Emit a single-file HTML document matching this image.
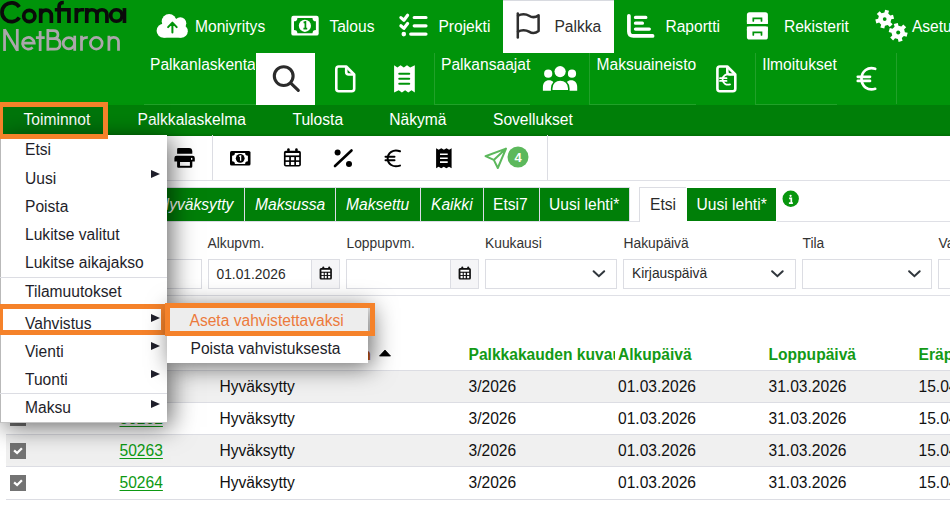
<!DOCTYPE html>
<html><head><meta charset="utf-8">
<style>
*{box-sizing:border-box}
html,body{margin:0;padding:0}
body{width:950px;height:514px;overflow:hidden;position:relative;background:#fff;font-family:"Liberation Sans",sans-serif;font-size:15.6px;color:#222}
.a{position:absolute;white-space:nowrap}
.t{position:absolute;white-space:nowrap;line-height:20px;height:20px}
#hdr{position:absolute;left:0;top:0;width:950px;height:105px;background:#00940a}
.w{color:#fff}
.sep{position:absolute;width:1px;background:rgba(255,255,255,.13)}
.hl{position:absolute;height:1px;background:rgba(255,255,255,.13)}
#mb{position:absolute;left:0;top:105px;width:950px;height:30.6px;background:linear-gradient(#007f08 0,#007f08 90%,#006f05 100%)}
#tb{position:absolute;left:0;top:135px;width:950px;height:46px;border-bottom:1px solid #dfe0e6}
.tsep{position:absolute;top:135px;width:1px;height:45px;background:#dcdde3}
.tab{position:absolute;top:187px;height:35px;background:#007f08;color:#fff;border:1px solid #dcdce6;font-style:italic}
.lbl{position:absolute;font-size:13.8px;color:#333;line-height:16px;white-space:nowrap}
.inp{position:absolute;top:259px;height:30px;border:1px solid #dcdde3;background:#fff}
.row{position:absolute;left:6px;width:944px;border-bottom:1px solid #dcdde3}
.g{background:#f0f0f0}
.chk{position:absolute;left:10px;width:16px;height:16px;background:#737373}
.lnk{color:#0d9912;text-decoration:underline;text-underline-offset:2px}
.th{font-weight:bold;color:#139a16}
#menu{position:absolute;left:0;top:135px;width:167px;height:287.5px;background:#fff;border-left:1px solid #b9b9b9;border-bottom:1px solid #c4c4c4;box-shadow:4px 4px 24px rgba(0,0,0,.6)}
.mi{position:absolute;left:25px;line-height:20px;height:20px;color:#1e1e2a}
.arr{position:absolute;left:150.8px;width:0;height:0;border-top:4.85px solid transparent;border-bottom:4.85px solid transparent;border-left:9.8px solid #1e1e2a}
.msep{position:absolute;left:0;width:167px;height:1px;background:#dcdde3}
.ob{position:absolute;border:5px solid #f5822a}
</style></head><body>
<div id="hdr"></div>
<svg class="a" style="left:0;top:0" width="130" height="55" viewBox="0 0 130 55">
 <g stroke="#0a0a0a" stroke-width="3.7" fill="none">
  <path d="M19.3 7A9.45 9.45 0 1 0 19.3 17.5"/>
  <circle cx="29.3" cy="15.95" r="5.6"/>
  <path d="M40.7 8.4V22.9M40.7 15.5C40.7 12 43 10.15 46 10.15C49 10.15 51.35 12 51.35 15.5V22.9"/>
  <path d="M59.1 22.9V6.5C59.1 3.8 60.8 2.5 63.8 2.5M54.8 9.75H70.7M68.95 8.1V22.9"/>
  <path d="M76.3 8.1V23M76.3 14.8C76.3 11.3 78.5 9.75 81.5 9.75H84.3"/>
  <path d="M86.75 8.1V23M86.75 15C86.75 11.5 89 9.75 91.9 9.75C94.8 9.75 97 11.5 97 15V23M97 15C97 11.5 99.2 9.75 102 9.75C104.8 9.75 106.95 11.5 106.95 15V23"/>
  <circle cx="116.4" cy="15.5" r="5.75"/>
  <path d="M124.45 8.1V23"/>
 </g>
 <g stroke="#aba7ab" stroke-width="2.75" fill="none">
  <path d="M4.55 51.1V28.9M4.55 29.4L17.3 50.6M17.3 51.1V28.9"/>
  <path d="M22.55 43H34.25A5.85 5.85 0 1 0 32.6 47.4"/>
  <path d="M40.15 30.9V51.1M35.9 37.5H44.7"/>
  <path d="M47.85 28.9V50.85M47.85 30.55H53.5C56.5 30.55 57.95 32.3 57.95 34.6C57.95 36.9 56.5 38.6 53.5 38.6H47.85M47.85 38.6H54.5C58 38.6 60.05 40.6 60.05 43.9C60.05 47.2 58 49.2 54.5 49.2H47.85"/>
  <circle cx="68.85" cy="43.25" r="5.65"/><path d="M74.7 35.7V50.8"/>
  <path d="M81.5 35.7V50.8M81.5 42C81.5 38.5 83.5 37.35 87.8 37.35"/>
  <circle cx="96.3" cy="43.25" r="5.85"/>
  <path d="M108.9 35.7V50.8M108.9 42.5C108.9 39 111 37.35 113.7 37.35C116.4 37.35 118.5 39 118.5 42.5V50.8"/>
 </g>
</svg>
<div class="t w" style="left:195px;top:16.7px">Moniyritys</div>
<div class="t w" style="left:329.4px;top:16.7px">Talous</div>
<div class="t w" style="left:438.4px;top:16.7px">Projekti</div>
<div class="a" style="left:503px;top:0;width:111px;height:53px;background:#fff;border-top:1px solid #d8dae0"></div>
<div class="t" style="left:554.4px;top:16.7px;color:#2e2e2e">Palkka</div>
<div class="t w" style="left:665.4px;top:16.7px">Raportti</div>
<div class="t w" style="left:783.9px;top:16.7px">Rekisterit</div>
<div class="t w" style="left:911.9px;top:16.7px">Asetukset</div>
<div class="t w" style="left:150px;top:54.7px;width:105px;overflow:hidden">Palkanlaskenta</div>
<div class="a" style="left:256px;top:53px;width:59px;height:52px;background:#fff"></div>
<div class="t w" style="left:441px;top:54.7px">Palkansaajat</div>
<div class="t w" style="left:596.5px;top:54.7px">Maksuaineisto</div>
<div class="t w" style="left:762.3px;top:55px">Ilmoitukset</div>
<div class="sep" style="left:434px;top:53px;height:51px"></div>
<div class="sep" style="left:589px;top:53px;height:51px"></div>
<div class="sep" style="left:755px;top:53px;height:51px"></div>
<div class="sep" style="left:896px;top:53px;height:51px"></div>
<div class="hl" style="left:144px;top:104px;width:112px"></div>
<div class="hl" style="left:434px;top:104px;width:96px"></div>
<div class="hl" style="left:589px;top:104px;width:107px"></div>
<div class="hl" style="left:755px;top:104px;width:82px"></div>
<svg class="a" style="left:0;top:0" width="950" height="105" viewBox="0 0 950 105">
 <g fill="#fff">
  <circle cx="169.1" cy="21.5" r="7.4"/><circle cx="180.3" cy="23.3" r="6"/><circle cx="163.6" cy="30.7" r="7"/><circle cx="181.3" cy="31.2" r="6.5"/><rect x="163.6" y="23" width="17.7" height="14.7"/>
 </g>
 <path d="M172.4 32.6V22.8M168.1 27.1L172.4 22.6L176.7 27.1" stroke="#00940a" stroke-width="2" fill="none" stroke-linecap="round" stroke-linejoin="round"/>
 <rect x="291.3" y="15.8" width="27.4" height="19.8" rx="2.2" fill="#fff"/>
 <path d="M297.4 17.9H312.5A3.4 3.4 0 0 0 315.9 21.3V29.9A3.4 3.4 0 0 0 312.5 33.3H297.4A3.4 3.4 0 0 0 294 29.9V21.3A3.4 3.4 0 0 0 297.4 17.9Z" fill="#00940a"/>
 <circle cx="304.9" cy="25.8" r="6.1" fill="#fff"/>
 <path d="M303.6 22.6L305.4 22V28.4M303.4 28.6H307.2" stroke="#00940a" stroke-width="1.7" fill="none"/>
 <g stroke="#fff" stroke-width="3.2" stroke-linecap="round" stroke-linejoin="round" fill="none">
  <path d="M400.9 17.6L403.9 20.2L407.6 15.3M400.9 25.8L403.9 28.4L407.6 23.5"/>
  <path d="M414.2 17.5H426M414.2 25.8H426M410.7 34.1H426"/>
 </g>
 <circle cx="403.8" cy="34.1" r="2.3" fill="#fff"/>
 <g stroke="#2e2e2e" stroke-width="2.5" fill="none" stroke-linecap="round" stroke-linejoin="round">
  <path d="M517.8 13.6V37.4"/>
  <path d="M518 15.7C521 13.8 526 13.8 529 15.7C532 17.6 536 17.2 538.6 15.2V31C536 33 532 33.5 529 31.6C526 29.7 521 29.7 518 31.6"/>
 </g>
 <g stroke="#fff" stroke-linecap="round" fill="none">
  <path d="M628.9 15.8V31.5Q628.9 35.9 633.3 35.9H652.6" stroke-width="3.7" stroke-linejoin="round"/>
  <path d="M635.5 17.4H645.8M635.5 23.2H642.4M635.5 29.1H649.3" stroke-width="3.3"/>
 </g>
 <rect x="746.9" y="12.2" width="21" height="11.8" rx="2.6" fill="#fff"/>
 <rect x="746.9" y="26.6" width="21" height="12.9" rx="2.6" fill="#fff"/>
 <rect x="746.9" y="20" width="21" height="4" fill="#fff"/><rect x="746.9" y="26.6" width="21" height="4" fill="#fff"/>
 <path d="M753.3 21V18.3H761.5V21M753.3 35V32.3H761.5V35" stroke="#00940a" stroke-width="1.7" fill="none" stroke-linecap="round"/>
 <g fill="#fff">
  <path d="M890.29 15.58 L893.03 14.75 L894.09 18.71 L891.30 19.35 L890.54 22.18 L892.64 24.14 L889.74 27.04 L887.78 24.94 L884.95 25.70 L884.31 28.49 L880.35 27.43 L881.18 24.69 L879.11 22.62 L876.37 23.45 L875.31 19.49 L878.10 18.85 L878.86 16.02 L876.76 14.06 L879.66 11.16 L881.62 13.26 L884.45 12.50 L885.09 9.71 L889.05 10.77 L888.22 13.51Z"/>
  <path d="M904.90 32.14 L907.69 32.80 L906.62 36.80 L903.87 35.97 L901.77 38.07 L902.60 40.82 L898.60 41.89 L897.94 39.10 L895.07 38.33 L893.11 40.42 L890.18 37.49 L892.27 35.53 L891.50 32.66 L888.71 32.00 L889.78 28.00 L892.53 28.83 L894.63 26.73 L893.80 23.98 L897.80 22.91 L898.46 25.70 L901.33 26.47 L903.29 24.38 L906.22 27.31 L904.13 29.27Z"/>
 </g>
 <circle cx="884.7" cy="19.1" r="1.9" fill="#00940a"/><circle cx="898.2" cy="32.4" r="2" fill="#00940a"/>
 <g stroke="#2b2b2b" stroke-width="3.1" fill="none" stroke-linecap="round">
  <circle cx="283.7" cy="76.1" r="9.4"/><path d="M291.3 83.6L298.3 90.4"/>
 </g>
 <g stroke="#fff" stroke-width="2.6" fill="none" stroke-linejoin="round">
  <path d="M336.3 69Q336.3 66.5 338.8 66.5H346.2L354.2 74.5V88.7Q354.2 91.2 351.7 91.2H338.8Q336.3 91.2 336.3 88.7Z"/>
  <path d="M346.2 66.5V72Q346.2 74.5 348.7 74.5H354.2"/>
  <path d="M717.4 69Q717.4 66.5 719.9 66.5H727.3L735.3 74.5V88.7Q735.3 91.2 732.8 91.2H719.9Q717.4 91.2 717.4 88.7Z"/>
  <path d="M727.3 66.5V72Q727.3 74.5 729.8 74.5H735.3"/>
 </g>
 <path d="M730 74.5C726 73.5 722.6 76 722.6 79.5C722.6 83 726 85.5 730 84.4M720 78.2H726.5M720 80.9H726.5" stroke="#fff" stroke-width="1.8" fill="none" stroke-linecap="round"/>
 <path d="M394.1 65.2L397.4 67.4L400.6 65.2L403.8 67.4L407 65.2L410.2 67.4L414.8 65.2V92.5L411.5 90.3L408.3 92.5L405.1 90.3L401.9 92.5L398.7 90.3L394.1 92.5Z" fill="#fff"/>
 <path d="M399.3 73.7H409.2M399.3 78.8H409.2M399.3 83.8H409.2" stroke="#00940a" stroke-width="2.1" stroke-linecap="round"/>
 <g fill="#fff">
  <circle cx="560.1" cy="71.6" r="5.6"/><circle cx="548.2" cy="73.7" r="4.1"/><circle cx="572" cy="73.7" r="4.1"/>
  <path d="M542.9 90.8V87C542.9 83 545.5 80.3 549 80.3C552.5 80.3 555 83 555 87V90.8Z"/>
  <path d="M565.2 90.8V87C565.2 83 567.7 80.3 571.2 80.3C574.7 80.3 577.2 83 577.2 87V90.8Z"/>
 </g>
 <path d="M551.7 90.8V88.5C551.7 83.2 555.5 80 560.2 80C565 80 568.8 83.2 568.8 88.5V90.8Z" fill="#fff" stroke="#00940a" stroke-width="1.6"/>
 <path d="M875.2 68.8C868 66.5 861.5 71 861.5 78.8C861.5 86.6 868 91 875.2 88.8M857.8 76.8H870M857.8 80.9H870" stroke="#fff" stroke-width="2.7" fill="none" stroke-linecap="round"/>
</svg>

<div id="mb"></div>
<div class="a" style="left:0;top:105px;width:103px;height:30px;background:#00750b"></div>
<div class="t w" style="left:23.5px;top:110px">Toiminnot</div>
<div class="t w" style="left:137.5px;top:110px">Palkkalaskelma</div>
<div class="t w" style="left:292.5px;top:110px">Tulosta</div>
<div class="t w" style="left:389.3px;top:110px">Näkymä</div>
<div class="t w" style="left:493px;top:110px">Sovellukset</div>

<div id="tb"></div>
<div class="tsep" style="left:212px"></div>
<div class="tsep" style="left:546.5px"></div>
<svg class="a" style="left:0;top:135px" width="950" height="46" viewBox="0 135 950 46">
 <g fill="#000">
  <path d="M177.1 149.3Q177.1 148.1 178.3 148.1H189Q192.3 148.1 192.3 151.5V153.8H177.1Z"/>
  <path d="M176.6 155.7H192.6Q194.8 155.7 194.8 157.9V161.4H192.3V166.4Q192.3 167.7 191 167.7H178.4Q177.1 167.7 177.1 166.4V161.4H174.4V157.9Q174.4 155.7 176.6 155.7Z"/>
 </g>
 <rect x="180" y="162" width="9.9" height="3.8" fill="#fff"/>
 <rect x="191" y="157.9" width="1.3" height="1.9" fill="#fff"/>
 <rect x="230" y="150.9" width="20.5" height="14.7" rx="1.6" fill="#000"/>
 <path d="M234.9 153H245.1A2.8 2.8 0 0 0 247.9 155.8V161.2A2.8 2.8 0 0 0 245.1 164H234.9A2.8 2.8 0 0 0 232.1 161.2V155.8A2.8 2.8 0 0 0 234.9 153Z" fill="#fff"/>
 <circle cx="240.2" cy="158.3" r="4.4" fill="#000"/>
 <path d="M239.2 156.4L240.6 155.9V160.8" stroke="#fff" stroke-width="1.3" fill="none"/>
 <rect x="283.9" y="150.8" width="17" height="15.8" rx="2" fill="#000"/>
 <rect x="287.2" y="148.2" width="2.5" height="4" rx="1.2" fill="#000"/><rect x="295.2" y="148.2" width="2.5" height="4" rx="1.2" fill="#000"/>
 <g fill="#fff"><rect x="285.6" y="153" width="13.6" height="2.4"/>
 <rect x="285.6" y="157.1" width="3.6" height="3.2"/><rect x="290.9" y="157.1" width="3.4" height="3.2"/><rect x="296" y="157.1" width="3.2" height="3.2"/>
 <rect x="285.6" y="161.9" width="3.6" height="3.1"/><rect x="290.9" y="161.9" width="3.4" height="3.1"/><rect x="296" y="161.9" width="3.2" height="3.1"/></g>
<path d="M335 166L351.5 150.5" stroke="#000" stroke-width="2.6" stroke-linecap="round"/>
 <circle cx="337.6" cy="152.6" r="3" fill="#000"/><circle cx="349" cy="164" r="3" fill="#000"/>
 <path d="M400 151.3C393 148.8 387.7 153 387.7 158.5C387.7 164 393 168 400 165.6M385.5 156.8H394.5M385.5 160.3H394.5" stroke="#000" stroke-width="2" fill="none" stroke-linecap="round"/>
 <path d="M436.1 148.2L438.7 149.7L441.3 148.2L443.9 149.7L446.5 148.2L449.1 149.7L451.6 148.2V168.2L449 166.7L446.4 168.2L443.8 166.7L441.2 168.2L438.6 166.7L436.1 168.2Z" fill="#000"/>
 <path d="M440 154.3H447.7M440 158.2H447.7M440 162.1H447.7" stroke="#fff" stroke-width="1.6"/>
 <path d="M506 148.6L485.5 156.2L493.8 159.9L497.8 168L506 148.6ZM493.8 159.9L506 148.6" stroke="#5cb85c" stroke-width="2" fill="none" stroke-linejoin="round"/>
 <circle cx="518" cy="157" r="10.5" fill="#5cb85c"/>
 <text x="518" y="161.8" font-family="Liberation Sans" font-weight="bold" font-size="13" fill="#fff" text-anchor="middle">4</text>
</svg>


<div class="a" style="left:0;top:221px;width:950px;height:1px;background:#dfe0e6"></div>
<div class="tab" style="left:150px;width:95px"><span class="t" style="left:7px;top:6.8px">Hyväksytty</span></div>
<div class="tab" style="left:244px;width:92px"><span class="t" style="left:10px;top:6.8px">Maksussa</span></div>
<div class="tab" style="left:335px;width:86px"><span class="t" style="left:10px;top:6.8px">Maksettu</span></div>
<div class="tab" style="left:420px;width:64px"><span class="t" style="left:10px;top:6.8px">Kaikki</span></div>
<div class="tab" style="left:483px;width:57px;font-style:normal"><span class="t" style="left:9px;top:6.8px">Etsi7</span></div>
<div class="tab" style="left:539px;width:91px;font-style:normal"><span class="t" style="left:9px;top:6.8px">Uusi lehti*</span></div>
<div class="a" style="left:639px;top:187px;width:48px;height:35px;background:#fff;border:1px solid #dcdde3;border-bottom:0"></div>
<div class="t" style="left:650px;top:194.5px;color:#2a2a2a">Etsi</div>
<div class="tab" style="left:686px;width:91px;font-style:normal;border-color:#fff"><span class="t" style="left:9.5px;top:6.8px">Uusi lehti*</span></div>
<svg class="a" style="left:782px;top:190px" width="18" height="18" viewBox="0 0 18 18"><circle cx="8.7" cy="8.75" r="8.2" fill="#08960e"/><circle cx="8.6" cy="5.8" r="1.15" fill="#fff"/><path d="M7.1 8.3H9.3V12.9M6.9 13.2H10.9" stroke="#fff" stroke-width="1.7" fill="none"/></svg>

<div class="lbl" style="left:207.5px;top:236px">Alkupvm.</div>
<div class="lbl" style="left:346.5px;top:236px">Loppupvm.</div>
<div class="lbl" style="left:485px;top:236px">Kuukausi</div>
<div class="lbl" style="left:623.5px;top:236px">Hakupäivä</div>
<div class="lbl" style="left:802.5px;top:236px">Tila</div>
<div class="lbl" style="left:938.5px;top:236px">Valinta</div>
<div class="inp" style="left:100px;width:102px"></div>
<div class="inp" style="left:208px;width:132px"></div>
<div class="a" style="left:311px;top:260px;width:28px;height:28px;background:#f5f5f7;border-left:1px solid #dcdde3"></div>
<div class="lbl" style="left:216.5px;top:267px;color:#2a2a2a">01.01.2026</div>
<div class="inp" style="left:346px;width:133px"></div>
<div class="a" style="left:450px;top:260px;width:28px;height:28px;background:#f5f5f7;border-left:1px solid #dcdde3"></div>
<div class="inp" style="left:485px;width:132px"></div>
<div class="inp" style="left:623px;width:173px"></div>
<div class="lbl" style="left:632px;top:266px;color:#2a2a2a">Kirjauspäivä</div>
<div class="inp" style="left:802px;width:130px"></div>
<div class="inp" style="left:938px;width:40px"></div>
<svg class="a" style="left:0;top:255px" width="950" height="40" viewBox="0 255 950 40">
  <g transform="translate(0 0)"><rect x="319.6" y="267.9" width="12.3" height="11.7" rx="1.5" fill="#111"/>
 <rect x="322.3" y="266.6" width="2" height="3" rx="1" fill="#111"/><rect x="328.2" y="266.6" width="2" height="3" rx="1" fill="#111"/>
 <g fill="#fff"><rect x="321.4" y="269.8" width="8.8" height="1.9"/>
 <rect x="321.5" y="272.8" width="2.2" height="2.2"/><rect x="324.8" y="272.8" width="1.9" height="2.2"/><rect x="328.1" y="272.8" width="2.1" height="2.2"/>
 <rect x="321.5" y="275.9" width="2.2" height="2.3"/><rect x="324.8" y="275.9" width="1.9" height="2.3"/><rect x="328.1" y="275.9" width="2.1" height="2.3"/></g></g>
 <g transform="translate(139 0)"><rect x="319.6" y="267.9" width="12.3" height="11.7" rx="1.5" fill="#111"/>
 <rect x="322.3" y="266.6" width="2" height="3" rx="1" fill="#111"/><rect x="328.2" y="266.6" width="2" height="3" rx="1" fill="#111"/>
 <g fill="#fff"><rect x="321.4" y="269.8" width="8.8" height="1.9"/>
 <rect x="321.5" y="272.8" width="2.2" height="2.2"/><rect x="324.8" y="272.8" width="1.9" height="2.2"/><rect x="328.1" y="272.8" width="2.1" height="2.2"/>
 <rect x="321.5" y="275.9" width="2.2" height="2.3"/><rect x="324.8" y="275.9" width="1.9" height="2.3"/><rect x="328.1" y="275.9" width="2.1" height="2.3"/></g></g>
<g stroke="#30363c" stroke-width="2" fill="none" stroke-linecap="round" stroke-linejoin="miter">
  <path d="M593.6 271.2L598.9 276.2L604.2 271.2"/>
  <path d="M772.1 271.2L777.4 276.2L782.7 271.2"/>
  <path d="M909.1 271.2L914.4 276.2L919.7 271.2"/>
 </g>
</svg>
<div class="a" style="left:0;top:295px;width:950px;height:1px;background:#dfe0e6"></div>

<div class="t" style="left:361.5px;top:344.5px;color:#c55a11;font-weight:bold">n</div>
<svg class="a" style="left:379px;top:349px" width="12" height="8" viewBox="0 0 12 8"><path d="M0.5 7L6 1L11.5 7Z" fill="#000" stroke="#000" stroke-width="0.8" stroke-linejoin="round"/></svg>
<div class="t th" style="left:468.5px;top:344.5px;width:146.3px;overflow:hidden">Palkkakauden kuvaus</div>
<div class="t th" style="left:618px;top:344.5px">Alkupäivä</div>
<div class="t th" style="left:768.5px;top:344.5px">Loppupäivä</div>
<div class="t th" style="left:918.5px;top:344.5px">Eräpäivä</div>
<div class="row" style="top:370px;height:1px;border:0;background:#dcdde3"></div>
<div class="row g" style="top:371px;height:32px"></div>
<div class="row" style="top:403px;height:32px"></div>
<div class="row g" style="top:435px;height:32px"></div>
<div class="row" style="top:467px;height:33px"></div>
<div class="chk" style="top:379px"><svg width="16" height="16" viewBox="0 0 16 16"><path d="M4.1 7.4L7.1 10L11.9 5.2" stroke="#fff" stroke-width="2.3" fill="none"/></svg></div>
<div class="t lnk" style="left:119.5px;top:377.3px">50261</div>
<div class="t" style="left:219.5px;top:377.3px;color:#111">Hyväksytty</div>
<div class="t" style="left:468.5px;top:377.3px;color:#111">3/2026</div>
<div class="t" style="left:618px;top:377.3px;color:#111">01.03.2026</div>
<div class="t" style="left:768.5px;top:377.3px;color:#111">31.03.2026</div>
<div class="t" style="left:918.5px;top:377.3px;color:#111">15.04.2026</div>
<div class="chk" style="top:410px"><svg width="16" height="16" viewBox="0 0 16 16"><path d="M4.1 7.4L7.1 10L11.9 5.2" stroke="#fff" stroke-width="2.3" fill="none"/></svg></div>
<div class="t lnk" style="left:119.5px;top:409.3px">50262</div>
<div class="t" style="left:219.5px;top:409.3px;color:#111">Hyväksytty</div>
<div class="t" style="left:468.5px;top:409.3px;color:#111">3/2026</div>
<div class="t" style="left:618px;top:409.3px;color:#111">01.03.2026</div>
<div class="t" style="left:768.5px;top:409.3px;color:#111">31.03.2026</div>
<div class="t" style="left:918.5px;top:409.3px;color:#111">15.04.2026</div>
<div class="chk" style="top:443px"><svg width="16" height="16" viewBox="0 0 16 16"><path d="M4.1 7.4L7.1 10L11.9 5.2" stroke="#fff" stroke-width="2.3" fill="none"/></svg></div>
<div class="t lnk" style="left:119.5px;top:441.3px">50263</div>
<div class="t" style="left:219.5px;top:441.3px;color:#111">Hyväksytty</div>
<div class="t" style="left:468.5px;top:441.3px;color:#111">3/2026</div>
<div class="t" style="left:618px;top:441.3px;color:#111">01.03.2026</div>
<div class="t" style="left:768.5px;top:441.3px;color:#111">31.03.2026</div>
<div class="t" style="left:918.5px;top:441.3px;color:#111">15.04.2026</div>
<div class="chk" style="top:475px"><svg width="16" height="16" viewBox="0 0 16 16"><path d="M4.1 7.4L7.1 10L11.9 5.2" stroke="#fff" stroke-width="2.3" fill="none"/></svg></div>
<div class="t lnk" style="left:119.5px;top:473.3px">50264</div>
<div class="t" style="left:219.5px;top:473.3px;color:#111">Hyväksytty</div>
<div class="t" style="left:468.5px;top:473.3px;color:#111">3/2026</div>
<div class="t" style="left:618px;top:473.3px;color:#111">01.03.2026</div>
<div class="t" style="left:768.5px;top:473.3px;color:#111">31.03.2026</div>
<div class="t" style="left:918.5px;top:473.3px;color:#111">15.04.2026</div>

<div id="menu"></div>
<div class="mi" style="top:139.6px">Etsi</div>
<div class="mi" style="top:168.6px">Uusi</div>
<div class="arr" style="top:170.2px"></div>
<div class="mi" style="top:196.8px">Poista</div>
<div class="mi" style="top:224.9px">Lukitse valitut</div>
<div class="mi" style="top:252.8px">Lukitse aikajakso</div>
<div class="mi" style="top:281.6px">Tilamuutokset</div>
<div class="mi" style="top:313.5px">Vahvistus</div>
<div class="arr" style="top:314.2px"></div>
<div class="mi" style="top:341.6px">Vienti</div>
<div class="arr" style="top:342.1px"></div>
<div class="mi" style="top:369.5px">Tuonti</div>
<div class="arr" style="top:369.9px"></div>
<div class="mi" style="top:397.6px">Maksu</div>
<div class="arr" style="top:399.9px"></div>
<div class="msep" style="top:277px"></div>
<div class="msep" style="top:393px"></div>
<div class="ob" style="left:-2px;top:304px;width:168px;height:31px"></div>
<div class="a" style="left:167px;top:304px;width:201px;height:59px;background:#fff;box-shadow:4px 4px 24px rgba(0,0,0,.6)"></div>
<div class="a" style="left:170px;top:308px;width:198px;height:23px;background:#ededed"></div>
<div class="t" style="left:189.5px;top:310.6px;color:#ec7a3c">Aseta vahvistettavaksi</div>
<div class="t" style="left:190.5px;top:338.6px;color:#1e1e2a">Poista vahvistuksesta</div>
<div class="ob" style="left:165px;top:303px;width:210px;height:33px"></div>
<div class="ob" style="left:-2px;top:102px;width:110px;height:37px"></div>
</body></html>
